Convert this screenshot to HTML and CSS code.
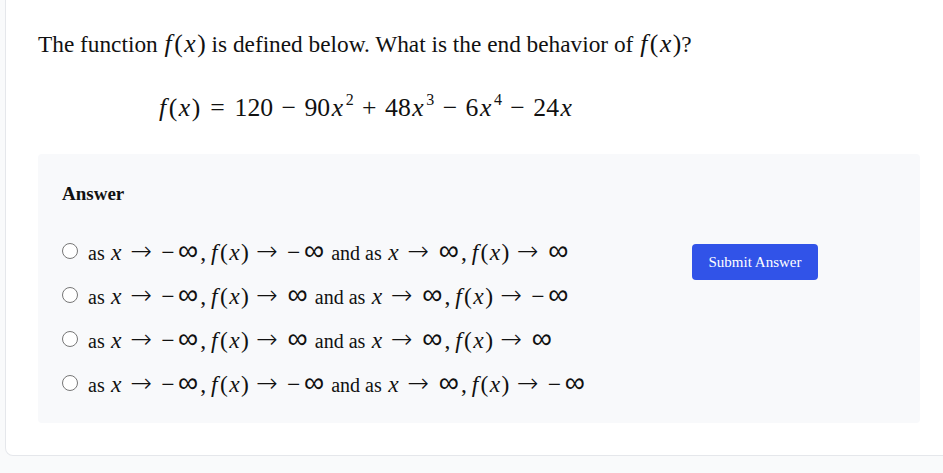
FILE: index.html
```html
<!DOCTYPE html>
<html lang="en">
<head>
  <meta charset="UTF-8">
  <meta name="viewport" content="width=device-width, initial-scale=1.0">
  <title>End Behavior</title>
  <link rel="stylesheet" href="styles.css">
</head>
<body>
  <div class="card">
    <p class="question">The function <span class="math"><i class="fn">f</i>(<i>x</i>)</span> is defined below. What is the end behavior of <span class="math"><i class="fn">f</i>(<i>x</i>)</span>?</p>
    <div class="equation math">
      <i class="fn">f</i>(<i>x</i>)<span class="rel eq">=</span>120<span class="bin">&minus;</span>90<i>x</i><sup>2</sup><span class="bin">+</span>48<i>x</i><sup>3</sup><span class="bin">&minus;</span>6<i>x</i><sup>4</sup><span class="bin">&minus;</span>24<i>x</i>
    </div>

    <div class="answer-box">
      <h3 class="answer-title">Answer</h3>
      <div class="answer-row">
        <div class="options">
          <label class="option">
            <input type="radio" name="answer">
            <span class="option-text">as <span class="math"><i>x</i><span class="rel">&rarr;</span><span class="neg">&minus;</span><span class="inf">&infin;</span>,<span class="thin"></span><i class="fn">f</i>(<i>x</i>)<span class="rel">&rarr;</span><span class="neg">&minus;</span><span class="inf">&infin;</span></span> and as <span class="math"><i>x</i><span class="rel">&rarr;</span><span class="inf">&infin;</span>,<span class="thin"></span><i class="fn">f</i>(<i>x</i>)<span class="rel">&rarr;</span><span class="inf">&infin;</span></span></span>
          </label>
          <label class="option">
            <input type="radio" name="answer">
            <span class="option-text">as <span class="math"><i>x</i><span class="rel">&rarr;</span><span class="neg">&minus;</span><span class="inf">&infin;</span>,<span class="thin"></span><i class="fn">f</i>(<i>x</i>)<span class="rel">&rarr;</span><span class="inf">&infin;</span></span> and as <span class="math"><i>x</i><span class="rel">&rarr;</span><span class="inf">&infin;</span>,<span class="thin"></span><i class="fn">f</i>(<i>x</i>)<span class="rel">&rarr;</span><span class="neg">&minus;</span><span class="inf">&infin;</span></span></span>
          </label>
          <label class="option">
            <input type="radio" name="answer">
            <span class="option-text">as <span class="math"><i>x</i><span class="rel">&rarr;</span><span class="neg">&minus;</span><span class="inf">&infin;</span>,<span class="thin"></span><i class="fn">f</i>(<i>x</i>)<span class="rel">&rarr;</span><span class="inf">&infin;</span></span> and as <span class="math"><i>x</i><span class="rel">&rarr;</span><span class="inf">&infin;</span>,<span class="thin"></span><i class="fn">f</i>(<i>x</i>)<span class="rel">&rarr;</span><span class="inf">&infin;</span></span></span>
          </label>
          <label class="option">
            <input type="radio" name="answer">
            <span class="option-text">as <span class="math"><i>x</i><span class="rel">&rarr;</span><span class="neg">&minus;</span><span class="inf">&infin;</span>,<span class="thin"></span><i class="fn">f</i>(<i>x</i>)<span class="rel">&rarr;</span><span class="neg">&minus;</span><span class="inf">&infin;</span></span> and as <span class="math"><i>x</i><span class="rel">&rarr;</span><span class="inf">&infin;</span>,<span class="thin"></span><i class="fn">f</i>(<i>x</i>)<span class="rel">&rarr;</span><span class="neg">&minus;</span><span class="inf">&infin;</span></span></span>
          </label>
        </div>
        <button class="submit">Submit Answer</button>
      </div>
    </div>
  </div>
</body>
</html>
```

FILE: styles.css
```css
body {
  margin: 0;
  background-color: #f9fafb;
  font-family: "Liberation Serif", "DejaVu Serif", serif;
  color: #111;
  overflow: hidden;
}

.card {
  background-color: #fff;
  margin-left: 5px;
  margin-right: -10px;
  border: 1px solid #e5e7eb;
  border-top: none;
  border-radius: 0 0 8px 8px;
  padding: 24px 32px 32px 32px;
}

.question {
  margin: 5px 0 0 0;
  font-size: 23.3px;
  line-height: 30px;
}

.question .math {
  font-size: 25.6px;
}

/* math bits, spaced roughly like KaTeX */
.math {
  font-family: "Liberation Serif", serif;
  white-space: nowrap;
}

.math i {
  font-style: italic;
  padding: 0 0.06em;
}

.math i.fn {
  padding: 0 0.1em 0 0.04em;
}

.math .rel,
.math .bin,
.math .neg,
.math .inf {
  display: inline-block;
  text-align: center;
}

.math .rel {
  width: 0.92em;
  margin: 0 0.25em;
  font-family: "DejaVu Sans", sans-serif;
  font-weight: 200;
  font-size: 1.1em;
  line-height: 1;
}

.math .rel.eq {
  width: 0.778em;
  margin: 0 0.278em;
  font-family: "Liberation Serif", serif;
  font-weight: normal;
  font-size: 1em;
}

.math .bin {
  width: 0.778em;
  margin: 0 0.222em;
}

.math .neg {
  width: 0.7em;
}

.math .inf {
  width: 0.86em;
  font-family: "DejaVu Sans", sans-serif;
  font-weight: 200;
  font-size: 1.2em;
  line-height: 1;
}

.math .thin {
  display: inline-block;
  width: 0.167em;
}

.equation {
  font-size: 25.7px;
  line-height: 30px;
  margin: 34px 0 0 120px;
}

.equation sup {
  font-size: 16px;
  vertical-align: 11px;
  line-height: 0;
  padding-left: 1px;
}

.answer-box {
  background-color: #f8f9fb;
  border-radius: 4px;
  margin: 31px 0 0 0;
  padding: 29px 24px 25px 24px;
}

.answer-title {
  margin: 0 0 31px 0;
  font-size: 19px;
  font-weight: bold;
}

.answer-row {
  display: flex;
  align-items: flex-start;
}

.options {
  display: flex;
  flex-direction: column;
  gap: 14px;
  width: 630px;
}

.option {
  display: flex;
  align-items: center;
  gap: 10px;
  height: 30px;
  font-size: 20px;
}

.option .math {
  font-size: 23.5px;
}

.option input {
  margin: 0;
  width: 16px;
  height: 16px;
  accent-color: #3153e8;
}

.submit {
  background-color: #3153e8;
  color: #fff;
  border: none;
  border-radius: 4px;
  font-family: "Liberation Serif", serif;
  font-size: 15px;
  width: 126px;
  height: 36px;
  margin-top: 8px;
  cursor: pointer;
}
```
